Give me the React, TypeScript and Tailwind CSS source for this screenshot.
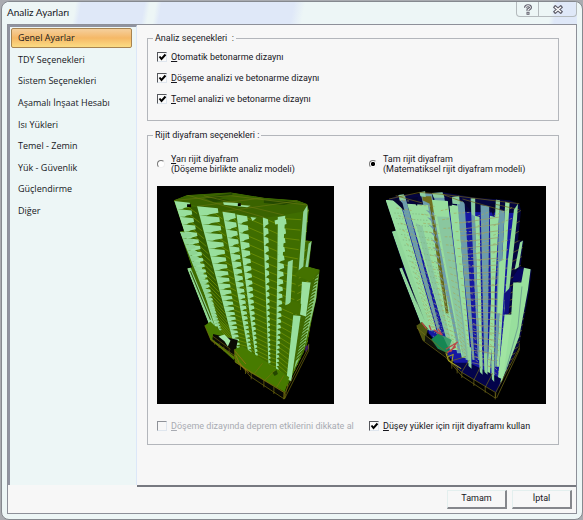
import { useState, type ReactNode } from 'react'
import clsx from 'clsx'

const sections = [
  'Genel Ayarlar',
  'TDY Seçenekleri',
  'Sistem Seçenekleri',
  'Aşamalı İnşaat Hesabı',
  'Isı Yükleri',
  'Temel - Zemin',
  'Yük - Güvenlik',
  'Güçlendirme',
  'Diğer',
]

type Point = [number, number]
type Column = { top: Point; bottom: Point; w: number; wb: number }

const FLOORS = 24
const RATIO = 0.96

// floors get closer to each other towards the ground
const floorAt = (k: number) =>
  (1 - Math.pow(RATIO, k)) / (1 - Math.pow(RATIO, FLOORS))

const along = (c: Column, t: number): Point => [
  c.top[0] + (c.bottom[0] - c.top[0]) * t,
  c.top[1] + (c.bottom[1] - c.top[1]) * t,
]

const widthAt = (c: Column, t: number) => c.w + (c.wb - c.w) * t

const path = (pts: Point[]) =>
  'M' + pts.map((p) => `${p[0].toFixed(1)} ${p[1].toFixed(1)}`).join('L') + 'Z'

const floors = Array.from({ length: FLOORS }, (_, k) => k)

const columns: Column[] = [
  { top: [72, 64], bottom: [194, 440], w: 46, wb: 12 },
  { top: [140, 80], bottom: [254, 508], w: 62, wb: 16 },
  { top: [216, 96], bottom: [294, 520], w: 38, wb: 9 },
  { top: [258, 104], bottom: [316, 540], w: 32, wb: 6 },
  { top: [337, 113], bottom: [354, 562], w: 15, wb: 5 },
  { top: [382, 112], bottom: [376, 572], w: 24, wb: 6 },
]

const edges: Column[] = [
  ...columns,
  { top: [452, 98], bottom: [410, 606], w: 16, wb: 10 },
]

const outline =
  'M70 62L110 46L240 38L340 54L440 62L470 73L475 92L466 182L483 183L474 260L507 270L500 330L470 495L410 620L300 575L178 440L110 266L124 262L88 155L100 152Z'

function toothed(c: Column) {
  return floors
    .map((k) => {
      const a = floorAt(k)
      const b = floorAt(k + 1)
      const [x1, y1] = along(c, a)
      const [x2, y2] = along(c, b)
      const w = widthAt(c, a)
      const h = y2 - y1
      return path([
        [x1, y1],
        [x1 + w, y1 + h * 0.2],
        [x1 + w + 2, y1 + h * 0.7],
        [x2 + w * 0.5, y1 + h * 0.85],
        [x2 + w * 0.35, y2],
        [x2, y2],
      ])
    })
    .join('')
}

function straight(c: Column) {
  return path([
    c.top,
    [c.top[0] + c.w, c.top[1] + 4],
    [c.bottom[0] + c.wb, c.bottom[1]],
    c.bottom,
  ])
}

function slabLines(drop: number) {
  return floors
    .map((k) => {
      const t = floorAt(k)
      return edges
        .slice(0, -1)
        .map((c, i) => {
          const [x1, y1] = along(c, t)
          const [x2, y2] = along(edges[i + 1], t)
          return `M${(x1 + widthAt(c, t) * 0.5).toFixed(1)} ${(y1 + drop * 0.2).toFixed(1)}L${x2.toFixed(1)} ${(y2 + drop * (1 - t)).toFixed(1)}`
        })
        .join('')
    })
    .join('')
}

function sideLines() {
  return floors
    .map((k) => {
      const t = floorAt(k)
      const y = 100 + 490 * t
      return `M${(462 - 44 * t).toFixed(1)} ${y.toFixed(1)}L${(504 - 40 * t * t).toFixed(1)} ${(y - 26).toFixed(1)}`
    })
    .join('')
}

function Podium({ slab }: { slab: string }) {
  return (
    <g>
      <path d="M163 437L180 425L262 505L250 540L180 478Z" fill={slab} />
      <path d="M188 462L262 480L252 530L186 478Z" fill="#0b0b04" />
      <path d="M252 508L275 498L416 592L402 638L300 578L254 546Z" fill={slab} />
      <path d="M302 579L402 636L402 652L302 592Z" fill="#070704" />
      <path
        d="M163 437L182 482L252 534L300 590L400 656L402 638L302 578L254 546L252 508M180 478L254 528M254 546L402 638M340 600V622M370 620V642M400 638V658M302 578V598M270 550V570M285 564V582M336 550L312 580M372 572L342 602M400 586L378 622M412 612L402 656L474 512V492M402 640L470 510"
        fill="none"
        stroke="#78720f"
        strokeWidth="2"
      />
      <path d="M192 482V494M206 490V504M220 500V514M236 508V526M186 468L240 508" fill="none" stroke="#6f5b12" strokeWidth="2" />
    </g>
  )
}

function SolidTower() {
  return (
    <svg
      viewBox="20 19 530 653"
      role="img"
      aria-label="Yarı rijit diyafram"
      className="block w-full bg-black"
    >
      <clipPath id="solid-outline">
        <path d={outline} />
      </clipPath>
      <g clipPath="url(#solid-outline)">
        <path d={outline} fill="#3f6d00" />
        <path d="M70 62L110 46L240 38L340 54L440 62L470 73L475 92L400 106L345 114L216 96L140 80Z" fill="#3a6300" />
        <path d="M160 54L245 40L246 46L200 56L240 62L190 68ZM340 60L440 66L400 76L340 70Z" fill="#234800" />
        <path
          d="M70 62L240 48L470 76M110 46L345 114M140 80L340 54M216 96L440 64M160 48L400 106"
          fill="none"
          stroke="#667610"
          strokeWidth="2"
        />
        <path d="M116 80L140 82L236 440L204 420Z" fill="#335d00" />
        <path d={slabLines(22)} fill="none" stroke="#7c9a08" strokeWidth="2" />
        <path d={columns.map(toothed).join('')} fill="#98df9d" />
        {/* stepped left wing */}
        <path
          d={
            toothed({ top: [88, 156], bottom: [206, 452], w: 34, wb: 8 }) +
            'M110 266L120 262L194 440L178 440Z'
          }
          fill="#8fd594"
        />
        <path d="M120 274L180 420" stroke="#2a4c00" strokeWidth="3" />
        <path d={sideLines()} stroke="#84981a" strokeWidth="2" fill="none" />
      </g>
      <path d="M218 68L262 70L272 76L300 78L290 83L220 75Z" fill="#9be09f" />
      <path d="M262 71H271V79H262ZM110 74H122V82H110Z" fill="#000" />
      <path d="M300 112L318 114L306 124ZM372 122L392 116L386 132L374 134Z" fill="#9be09f" />
      <path d="M382 112L404 108L396 240L384 244Z" fill="#98df9d" />
      {/* right wing */}
      <path d="M458 96L470 77L471 92L458 262L444 272Z" fill="#8ed395" />
      <path d="M470 184L483 184L475 260L462 262Z" fill="#3f6d00" />
      <path d="M474 192L483 184L472 262L464 264Z" fill="#8bcf93" />
      <path d="M430 284L458 260L507 270L480 306Z" fill="#447200" />
      <path d="M484 304L507 270L498 352L470 480L416 600L434 470L454 370Z" fill="#426c05" />
      <path d="M494 296L504 282L496 360L462 500L430 570L468 400Z" fill="#86c77c" />
      <path
        d={floors.map((k) => `M${468 - k * 1.5} ${312 + k * 10}L${503 - k * 2} ${290 + k * 10}`).join('')}
        stroke="#3d6900"
        strokeWidth="4"
      />
      <path d="M412 246L427 240L420 370L404 376Z" fill="#90d795" />
      <path d="M454 306L480 308L466 410L448 404Z" fill="#9be09f" />
      <path d="M404 382L426 362L452 372L448 406L410 392Z" fill="#437000" />
      <path d="M428 406L450 408L422 604L408 596Z" fill="#98df9d" />
      <path d="M464 500L476 494L474 506L464 516Z" fill="#3b1a5c" />
      <Podium slab="#477b00" />
      <path d="M204 470L222 464L240 482L232 500L222 484Z" fill="#a4e5a8" />
      <path d="M256 526L266 548L296 580M254 514L286 552" stroke="#b0701e" strokeWidth="2" fill="none" />
      <path d="M366 578L378 570L382 582L372 588Z" fill="#244600" />
    </svg>
  )
}

const blueColumns: Column[] = [
  { top: [68, 60], bottom: [200, 452], w: 44, wb: 22 },
  { top: [134, 72], bottom: [262, 510], w: 62, wb: 24 },
  { top: [206, 60], bottom: [298, 534], w: 50, wb: 14 },
  { top: [260, 74], bottom: [318, 562], w: 26, wb: 9 },
  { top: [337, 108], bottom: [352, 580], w: 14, wb: 8 },
  { top: [382, 108], bottom: [388, 602], w: 16, wb: 7 },
  { top: [400, 60], bottom: [374, 590], w: 12, wb: 8 },
  { top: [428, 66], bottom: [402, 560], w: 13, wb: 8 },
]

const tealColumns: Column[] = [
  { top: [108, 44], bottom: [230, 470], w: 20, wb: 8 },
  { top: [174, 38], bottom: [284, 520], w: 34, wb: 12 },
  { top: [212, 40], bottom: [310, 540], w: 32, wb: 10 },
  { top: [282, 62], bottom: [330, 540], w: 24, wb: 6 },
  { top: [324, 56], bottom: [346, 540], w: 12, wb: 4 },
  { top: [354, 76], bottom: [366, 580], w: 26, wb: 9 },
  { top: [410, 90], bottom: [396, 560], w: 16, wb: 6 },
]

function WireTower() {
  return (
    <svg
      viewBox="20 19 530 653"
      role="img"
      aria-label="Tam rijit diyafram"
      className="block w-full bg-black"
    >
      <clipPath id="wire-outline">
        <path d={outline} />
      </clipPath>
      <path d={outline} fill="#05053f" />
      <g clipPath="url(#wire-outline)">
        <path d="M86 90L460 100L412 620L300 580L200 460Z" fill="#1517a2" />
        <path d={tealColumns.map(straight).join('')} fill="#6c9cab" />
        <path d={blueColumns.map(straight).join('')} fill="#98dd9f" />
        <path d="M224 110L262 112L320 540L300 530ZM160 130L180 140L270 500L254 490Z" fill="#84bda0" opacity="0.7" />
        {/* stair core */}
        <path d="M180 50H206L210 70L234 240L258 400L250 400L224 240L202 72L180 62Z" fill="#706f1d" />
        <path
          d={floors
            .slice(0, 15)
            .map((k) => `M${190 + k * 4} ${90 + k * 22}L${216 + k * 3} ${100 + k * 22}L${212 + k * 4} ${112 + k * 22}Z`)
            .join('')}
          fill="#6c93a8"
        />
        <path d="M203 74L232 240L256 400" fill="none" stroke="#5f6420" strokeWidth="3" />
        <path
          d={floors.map((k) => `M${96 + k * 5} ${100 + k * 16}L${190 + k * 5} ${104 + k * 18}`).join('')}
          fill="none"
          stroke="#7fb07c"
          strokeWidth="2"
          strokeDasharray="4 5"
        />
        <path d={slabLines(-16)} fill="none" stroke="#a5a95e" strokeWidth="2" strokeDasharray="8 5" />
        <path
          d={floors.map((k) => `M${290 + k * 1.8} ${130 + k * 19}L${410 - k * 0.6} ${112 + k * 20.5}`).join('')}
          fill="none"
          stroke="#9c9a62"
          strokeWidth="2"
        />
        <path d="M88 155L102 152L206 446L192 452ZM110 266L118 262L192 440L178 440Z" fill="#91d69a" />
        <path d="M122 268L132 286L186 420Z" fill="#060622" />
        <path d={sideLines()} stroke="#75701f" strokeWidth="2" fill="none" />
      </g>
      <path d="M108 46L124 44L130 60L112 62ZM171 38L188 35L190 52L174 50ZM208 40L240 38L246 54L214 54ZM268 52L290 48L292 74L270 72ZM326 56H338V110L328 104ZM400 60L412 62L410 90L400 92Z" fill="#8bcda0" />
      <path d="M90 60L104 56L120 70L126 92ZM146 56L166 52L164 80ZM258 52H268V78H258ZM300 64H324V92ZM382 72L398 70L392 112Z" fill="#05052d" />
      <path
        d="M80 58L172 38L240 44L470 72M100 48L180 70M240 44L300 66M400 74L470 90M300 58L420 92"
        fill="none"
        stroke="#73651a"
        strokeWidth="2"
      />
      {/* right wing */}
      <path d="M454 90L466 72L463 120L440 330L424 400L436 240Z" fill="#90d998" />
      <path d="M472 188L481 182L468 262L456 270Z" fill="#96dc9c" />
      <path d="M452 290L468 266L484 268L478 306L450 304Z" fill="#060660" />
      <path d="M484 264L504 268L496 330L470 470L414 612L430 480L446 404L452 308L476 308Z" fill="#98df9d" />
      <path d="M478 320L466 440L430 570" stroke="#6fa690" strokeWidth="3" fill="none" />
      <path d="M410 246L424 240L418 400L404 400Z" fill="#98df9d" />
      <path d="M426 340L446 320L438 402H426Z" fill="#11117c" />
      <path d="M426 404H448L420 600L404 614Z" fill="#a0e4a2" />
      <path d="M163 437L178 426L196 446L188 484L182 482Z" fill="#4e5711" />
      <path d="M188 464L256 510L252 532L188 484Z" fill="#10120a" />
      <path d="M270 548L320 548L416 596L402 638L296 576Z" fill="#03034b" />
      <path d="M206 478L232 458L262 500L256 520L226 506Z" fill="#168653" />
      <path d="M240 466L268 480L258 504Z" fill="#3b9e6b" />
      <path
        d="M178 428L192 446M200 436L206 450M214 450L236 464M250 508L286 486M254 518L280 500M226 446L240 466M264 516L282 488"
        stroke="#b9484a"
        strokeWidth="4"
        fill="none"
      />
      <path
        d={[...blueColumns.slice(3, 6), tealColumns[5]].map((c) =>
          path([
            [c.bottom[0] - 2, c.bottom[1] - 60],
            [c.bottom[0] + c.wb - 1, c.bottom[1] - 60],
            [c.bottom[0] + c.wb, c.bottom[1] + 4],
            [c.bottom[0], c.bottom[1] - 4],
          ]),
        ).join('')}
        fill="#8fd29b"
      />
      <path
        d="M163 437L182 482L252 534L298 588L398 654L400 638L296 576L262 544L252 514M262 544L310 530M298 576L320 540M334 600L354 560M368 622L390 580M334 600V618M368 620V638M398 638V658M298 576V594M268 546V566M284 560V580M402 654L470 510V490M400 636L470 504M163 444L250 516"
        fill="none"
        stroke="#78701a"
        strokeWidth="2"
      />
      <path d="M250 518L258 542L296 566M256 530L272 524L268 548" stroke="#a8a523" strokeWidth="3" fill="none" />
    </svg>
  )
}

function Check({
  label,
  checked = false,
  disabled = false,
}: {
  label: string
  checked?: boolean
  disabled?: boolean
}) {
  return (
    <label className={clsx('flex items-center gap-1', disabled && 'text-[#a8abb2]')}>
      <span className="grid">
        <input
          type="checkbox"
          defaultChecked={checked}
          disabled={disabled}
          className="peer col-start-1 row-start-1 size-[10px] appearance-none border border-[#dfe6ee] border-t-[#55575c] border-l-[#55575c] bg-[#fafafa] disabled:border-t-[#8f9298] disabled:border-l-[#8f9298] disabled:bg-transparent"
        />
        <svg
          viewBox="0 0 10 10"
          className="pointer-events-none invisible col-start-1 row-start-1 size-[10px] peer-checked:visible"
        >
          <path d="M2.5 4.5L4.5 7L8.5 2.5" fill="none" stroke="#000" strokeWidth="2" />
        </svg>
      </span>
      <span>
        <u className="underline-offset-1">{label[0]}</u>
        {label.slice(1)}
      </span>
    </label>
  )
}

function Radio({
  children,
  note,
  checked = false,
}: {
  children: ReactNode
  note: string
  checked?: boolean
}) {
  return (
    <label className="flex items-center gap-1.5 leading-[10px]">
      <input
        type="radio"
        name="diyafram"
        defaultChecked={checked}
        className="size-2 shrink-0 appearance-none rounded-full border border-[#f0f0f0] border-t-[#777] border-l-[#777] bg-white checked:bg-[radial-gradient(#000_45%,#fff_55%)]"
      />
      <span className="whitespace-nowrap">
        {children}
        <br />
        {note}
      </span>
    </label>
  )
}

function DialogButton({ children }: { children: ReactNode }) {
  return (
    <button
      type="button"
      className="h-[19px] w-[60px] border border-r-2 border-b-2 border-[#e3efee] border-r-[#85878c] border-b-[#85878c] bg-[#f7f7f7]"
    >
      {children}
    </button>
  )
}

export default function App() {
  const [active, setActive] = useState(0)

  return (
    <div className="flex min-h-screen flex-col bg-[#a9abb0] pt-px pl-px font-[Roboto,'Liberation_Sans',sans-serif] text-[9px] text-[#16161c]">
      <div className="flex grow flex-col rounded-lg border border-[#85898f] bg-[#edf6f6] px-[5px] pb-[5px]">
        <header className="flex h-[22px] justify-between bg-[linear-gradient(100deg,#edf6f6_12%,#dfe8f8_13%,#dfe8f8_24%,#edf6f6_25%,#edf6f6_26%,#dfe8f8_27%,#dfe8f8_50%,#edf6f6_52%,#edf6f6_95%,#dfe8f8_96%)]">
          <h1 className="font-[Lato,'Open_Sans',sans-serif] text-[10px] leading-[21px]">
            Analiz Ayarları
          </h1>
          <div className="flex h-[15px] rounded-b-[4px] border border-t-0 border-[#b4babd]">
            <button type="button" aria-label="Yardım" className="grid w-[22px] place-items-center border-r border-[#b4babd]">
              <svg viewBox="0 0 8 11" className="h-[11px] w-2">
                <path d="M1.5 3.8Q1.5 1.7 4 1.7T6.5 3.6Q6.5 4.8 4 5.6V7" fill="none" stroke="#62626e" strokeWidth="3" />
                <path d="M2.5 7.8H5.5V10.8H2.5Z" fill="#62626e" />
                <path d="M1.5 3.8Q1.5 1.7 4 1.7T6.5 3.6Q6.5 4.8 4 5.6V7" fill="none" stroke="#fff" strokeWidth="1" />
                <path d="M3.5 8.8H4.5V9.8H3.5Z" fill="#fff" />
              </svg>
            </button>
            <button type="button" aria-label="Kapat" className="grid w-[37px] place-items-center">
              <svg viewBox="0 0 10 9" className="h-[9px] w-[10px]">
                <path d="M1 1L9 8M9 1L1 8" stroke="#62626e" strokeWidth="3.5" />
                <path d="M2 2L8 7M8 2L2 7" stroke="#fff" strokeWidth="1.4" />
              </svg>
            </button>
          </div>
        </header>

        <div className="flex grow flex-col border border-[#8d9099] bg-[#f7f7f7]">
          <div className="flex grow">
            <nav className="mb-0.5 flex w-[129px] shrink-0 flex-col border-t-2 border-r border-l-2 border-[#9093a0] border-r-[#dce7f8] bg-[#edf6f6] pt-px pr-1 pl-px font-['Open_Sans','Noto_Sans',sans-serif]">
              <div className="flex h-[193px] flex-col justify-between">
                {sections.map((name, i) => (
                  <button
                    key={name}
                    type="button"
                    onClick={() => setActive(i)}
                    className={clsx(
                      'h-5 rounded-[2px] border pl-1.5 text-left leading-[18px] whitespace-nowrap',
                      i === active
                        ? 'border-[#a88450] bg-linear-to-b from-[#f5cf9c] via-[#f5b866] via-50% to-[#fbdc83]'
                        : 'border-transparent',
                    )}
                  >
                    {name}
                  </button>
                ))}
              </div>
            </nav>

            <main className="flex grow flex-col gap-2 border-b-2 border-[#777980] pt-[7px] pr-[17px] pl-2.5">
              <fieldset className="h-[89px] border border-[#b3b6bb] px-[9px]">
                <legend className="-ml-1 px-0.5 leading-3">Analiz seçenekleri &nbsp;:</legend>
                <div className="flex flex-col gap-[9px] pt-[7px] leading-3">
                  <Check label="Otomatik betonarme dizaynı" checked />
                  <Check label="Döşeme analizi ve betonarme dizaynı" checked />
                  <Check label="Temel analizi ve betonarme dizaynı" checked />
                </div>
              </fieldset>

              <fieldset className="border border-[#b3b6bb] px-[9px] pb-3">
                <legend className="-ml-1 px-0.5 leading-3">Rijit diyafram seçenekleri :</legend>
                <div className="grid grid-cols-2 gap-x-[35px] pt-[13px] pr-[3px]">
                  <div className="flex flex-col gap-3">
                    <Radio note="(Döşeme birlikte analiz modeli)">
                      <u>Y</u>arı rijit diyafram
                    </Radio>
                    <SolidTower />
                  </div>
                  <div className="flex flex-col gap-3">
                    <Radio note="(Matematiksel rijit diyafram modeli)" checked>
                      Tam rijit diyafram
                    </Radio>
                    <WireTower />
                  </div>
                  <div className="pt-4 leading-3 whitespace-nowrap">
                    <Check label="Döşeme dizayında deprem etkilerini dikkate al" disabled />
                  </div>
                  <div className="pt-4 leading-3 whitespace-nowrap">
                    <Check label="Düşey yükler için rijit diyaframı kullan" checked />
                  </div>
                </div>
              </fieldset>
            </main>
          </div>

          <footer className="flex justify-end gap-[5px] pt-[3px] pr-1 pb-1">
            <DialogButton>Tamam</DialogButton>
            <DialogButton>İptal</DialogButton>
          </footer>
        </div>
      </div>
    </div>
  )
}
